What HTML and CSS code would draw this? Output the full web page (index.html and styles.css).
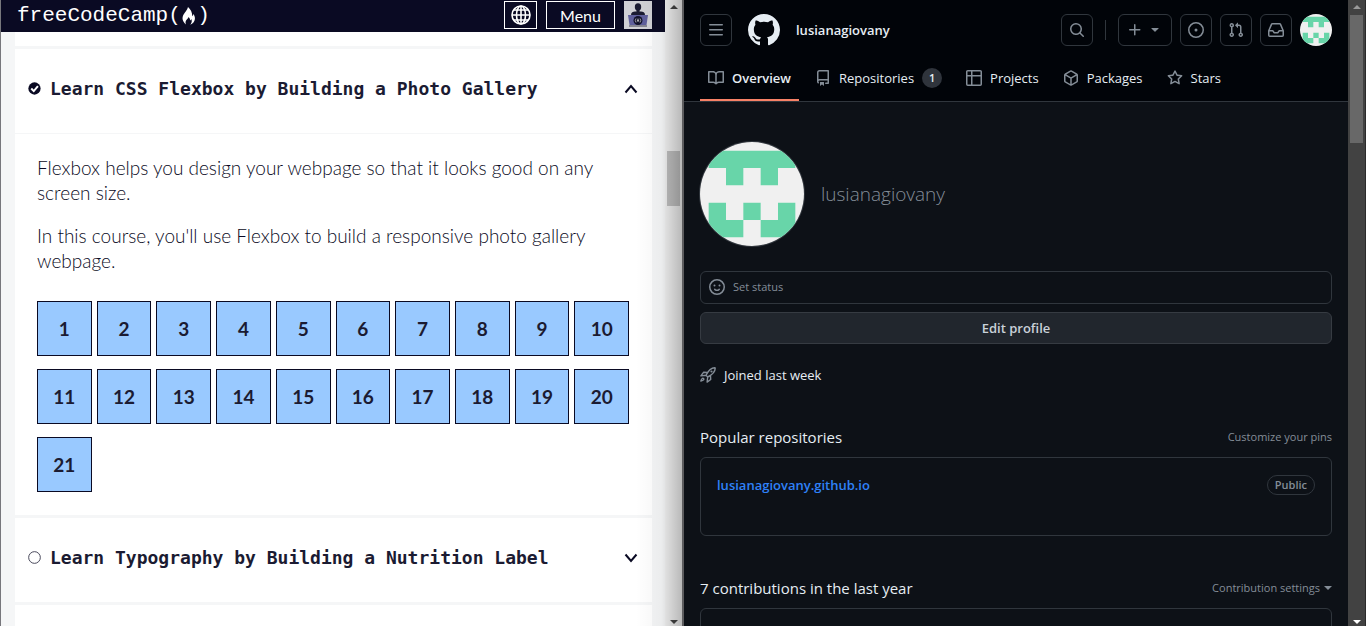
FILE: index.html
```html
<!DOCTYPE html>
<html lang="en">
<head>
<meta charset="utf-8">
<title>freeCodeCamp and GitHub</title>
<link rel="stylesheet" href="styles.css">
</head>
<body>
<svg class="defs" aria-hidden="true">
  <symbol id="identicon" viewBox="0 0 420 420"><rect width="420" height="420" fill="#f0f0f0"/><path fill="#68d5a9" d="M35 35h350v70h-70v70h-70v-70h-70v70h-70v-70H35zM35 245h70v70h70v70H35zM175 245h70v70h-70zM315 245h70v140H245v-70h70z"/></symbol>
</svg>
<div class="desktop">
  <section class="window camp">
    <div class="camp-page">
      <header class="camp-header">
        <a class="camp-logo" href="#">freeCodeCamp<span class="paren">(</span><svg class="flame" viewBox="0 0 14 18"><path fill="#fff" d="M6 0c-.4 3-3.200 5-4.700 8C.2 10.200.3 12.500 1.300 14.300c.6 1.200 1.500 2.300 2.700 3.200-.6-1.500-.6-3 .2-4.200C5 12 6.200 11.500 6.500 10c1 .8 1.700 2 1.600 3.400.6-.2 1-.7 1.200-1.300.9 1.900.5 3.900-1 5.600 2.500-1 4.400-3 4.600-5.600.2-2-.6-3.600-1.500-5-.1 1-.4 1.700-1.100 2.100C10.200 5.500 8.800 2.300 6 0z"/></svg><span class="paren">)</span></a>
        <div class="camp-actions">
          <button class="outline globe" aria-label="Language"><svg viewBox="0 0 20 20" fill="none" stroke="#fff" stroke-width="1.600"><circle cx="10" cy="10" r="9"/><ellipse cx="10" cy="10" rx="4.500" ry="9"/><path d="M10 1v18M1 10h18M2.500 5h15M2.500 15h15"/></svg></button>
          <button class="outline menu">Menu</button>
          <a class="profile" href="#" aria-label="Profile"><svg viewBox="0 0 28 28"><rect width="28" height="28" fill="#d0d0d5"/><g fill="#1b1b32"><ellipse cx="14" cy="6" rx="3.200" ry="3.700"/><path d="M12.500 8h3v3h-3zM7 14c0-2.500 2-3.200 4-3.400h6c2 .2 4 .9 4 3.400z"/></g><path fill="#5f5f9c" d="M4 14h20l-1.500 10h-17z"/><path fill="#858591" d="M5 24h18v2H5z"/><circle cx="14" cy="19.500" r="4.500" fill="#12122c"/><path d="M12 17.500q-1.500 2 0 4M16 17.500q1.500 2 0 4" fill="none" stroke="#bbb" stroke-width=".8"/><path d="M14 17l1.300 3.500h-2.600z" fill="#bbb"/></svg></a>
        </div>
      </header>
      <main class="course-list">
        <div class="course-previous"></div>
        <article class="course">
          <button class="course-title"><svg class="mark" viewBox="0 0 14 14"><circle cx="7" cy="7" r="6.600" fill="#0a0a23"/><path d="M3.500 7l2.700 2.800 4.500-5.300" fill="none" stroke="#fff" stroke-width="2.200"/></svg><span>Learn CSS Flexbox by Building a Photo Gallery</span><svg class="chevron" viewBox="0 0 14 10"><path d="M1.500 8.500L7 2l5.500 6.500" fill="none" stroke="#0a0a23" stroke-width="2"/></svg></button>
          <div class="course-body">
            <p>Flexbox helps you design your webpage so that it looks good on any screen size.</p>
            <p>In this course, you'll use Flexbox to build a responsive photo gallery webpage.</p>
            <nav class="steps" aria-label="Steps">
              <a href="#">1</a><a href="#">2</a><a href="#">3</a><a href="#">4</a><a href="#">5</a><a href="#">6</a><a href="#">7</a><a href="#">8</a><a href="#">9</a><a href="#">10</a><a href="#">11</a><a href="#">12</a><a href="#">13</a><a href="#">14</a><a href="#">15</a><a href="#">16</a><a href="#">17</a><a href="#">18</a><a href="#">19</a><a href="#">20</a><a href="#">21</a>
            </nav>
          </div>
        </article>
        <article class="course">
          <button class="course-title"><svg class="mark" viewBox="0 0 14 14"><circle cx="7" cy="7" r="6.300" fill="none" stroke="#3b3b4f"/></svg><span>Learn Typography by Building a Nutrition Label</span><svg class="chevron" viewBox="0 0 14 10"><path d="M1.500 1.500L7 8l5.500-6.500" fill="none" stroke="#0a0a23" stroke-width="2"/></svg></button>
        </article>
        <article class="course course-next"></article>
      </main>
    </div>
    <div class="track light"><i class="arrow up"></i><i class="thumb"></i><i class="arrow down"></i></div>
    <div class="edge-shade"></div>
  </section>

  <section class="window hub">
    <div class="hub-page">
      <header class="hub-header">
        <div class="bar">
          <button class="box" aria-label="Open menu"><svg class="icon" viewBox="0 0 16 16"><path d="M1 2.750A.75.75 0 0 1 1.750 2h12.500a.75.75 0 0 1 0 1.500H1.750A.75.75 0 0 1 1 2.750Zm0 5A.75.75 0 0 1 1.750 7h12.500a.75.75 0 0 1 0 1.500H1.750A.75.75 0 0 1 1 7.750ZM1.750 12h12.500a.75.75 0 0 1 0 1.500H1.750a.75.75 0 0 1 0-1.500Z"/></svg></button>
          <a class="octocat" href="#" aria-label="Home"><svg viewBox="0 0 16 16"><path fill="#e6edf3" d="M8 0c4.420 0 8 3.580 8 8a8.013 8.013 0 0 1-5.450 7.590c-.4.080-.55-.17-.55-.38 0-.27.010-1.130.010-2.200 0-.75-.25-1.230-.54-1.480 1.780-.2 3.650-.88 3.650-3.950 0-.88-.31-1.590-.82-2.150.080-.2.360-1.020-.080-2.120 0 0-.67-.22-2.200.82-.64-.18-1.320-.27-2-.27-.68 0-1.360.090-2 .27-1.530-1.030-2.200-.82-2.200-.82-.44 1.100-.16 1.920-.080 2.120-.51.560-.82 1.280-.82 2.150 0 3.060 1.860 3.750 3.640 3.950-.23.200-.44.550-.51 1.070-.46.210-1.610.55-2.330-.66-.15-.24-.6-.83-1.230-.82-.67.010-.27.380.010.530.34.190.73.900.82 1.130.16.450.68 1.310 2.690.94 0 .67.010 1.300.010 1.490 0 .21-.15.450-.55.380A7.995 7.995 0 0 1 0 8c0-4.420 3.580-8 8-8Z"/></svg></a>
          <a class="owner" href="#">lusianagiovany</a>
          <div class="tools">
            <button class="box" aria-label="Search"><svg class="icon" viewBox="0 0 16 16"><path d="M10.680 11.740a6 6 0 0 1-7.922-8.982 6 6 0 0 1 8.982 7.922l3.040 3.040a.749.749 0 0 1-1.060 1.060l-3.040-3.040ZM11.500 7a4.499 4.499 0 1 0-8.997 0A4.499 4.499 0 0 0 11.500 7Z"/></svg></button>
            <i class="divider"></i>
            <button class="box create" aria-label="Create new"><svg class="icon" viewBox="0 0 16 16"><path d="M7.750 2a.75.75 0 0 1 .75.750V7h4.250a.75.75 0 0 1 0 1.500H8.500v4.250a.75.75 0 0 1-1.500 0V8.500H2.750a.75.75 0 0 1 0-1.500H7V2.750A.75.75 0 0 1 7.750 2Z"/></svg><svg class="icon" viewBox="0 0 16 16"><path d="m4.427 6.427 3.396 3.396a.25.25 0 0 0 .354 0l3.396-3.396A.25.25 0 0 0 11.396 6H4.604a.25.25 0 0 0-.177.427Z"/></svg></button>
            <button class="box" aria-label="Issues"><svg class="icon" viewBox="0 0 16 16"><path d="M8 9.500a1.500 1.500 0 1 0 0-3 1.500 1.500 0 0 0 0 3Z"/><path d="M8 0a8 8 0 1 1 0 16A8 8 0 0 1 8 0ZM1.500 8a6.500 6.500 0 1 0 13 0 6.500 6.500 0 0 0-13 0Z"/></svg></button>
            <button class="box" aria-label="Pull requests"><svg class="icon" viewBox="0 0 16 16"><path d="M1.500 3.250a2.250 2.250 0 1 1 3 2.122v5.256a2.251 2.251 0 1 1-1.500 0V5.372A2.250 2.250 0 0 1 1.500 3.250Zm5.677-.177L9.573.677A.25.25 0 0 1 10 .854V2.500h1A2.500 2.500 0 0 1 13.500 5v5.628a2.251 2.251 0 1 1-1.500 0V5a1 1 0 0 0-1-1h-1v1.646a.25.25 0 0 1-.427.177L7.177 3.427a.25.25 0 0 1 0-.354ZM3.750 2.500a.75.75 0 1 0 0 1.500.75.75 0 0 0 0-1.500Zm0 9.500a.75.75 0 1 0 0 1.500.75.75 0 0 0 0-1.500Zm8.250.750a.75.75 0 1 0 1.500 0 .75.75 0 0 0-1.500 0Z"/></svg></button>
            <button class="box" aria-label="Inbox"><svg class="icon" viewBox="0 0 16 16"><path d="M2.800 2.060A1.750 1.750 0 0 1 4.410 1h7.180c.7 0 1.333.417 1.610 1.060l2.740 6.395c.04.093.06.194.06.295v4.500A1.750 1.750 0 0 1 14.250 15H1.750A1.750 1.750 0 0 1 0 13.250v-4.500c0-.101.020-.202.060-.295Zm1.610.440a.25.25 0 0 0-.23.152L1.887 8H4.750a.75.75 0 0 1 .6.300L6.625 10h2.750l1.275-1.700a.75.75 0 0 1 .6-.3h2.863L11.820 2.652a.25.25 0 0 0-.23-.152Zm10.090 7h-2.875l-1.275 1.700a.75.75 0 0 1-.6.300h-3.500a.75.75 0 0 1-.6-.3L4.375 9.500H1.500v3.750c0 .138.112.250.250.250h12.500a.25.25 0 0 0 .250-.250Z"/></svg></button>
            <a class="avatar small" href="#" aria-label="Account"><svg><use href="#identicon"/></svg></a>
          </div>
        </div>
        <nav class="tabs">
          <a class="tab current" href="#"><svg class="icon" viewBox="0 0 16 16"><path d="M0 1.750A.75.75 0 0 1 .75 1h4.253c1.227 0 2.317.590 3 1.501A3.743 3.743 0 0 1 11.006 1h4.245a.75.75 0 0 1 .75.750v10.500a.75.75 0 0 1-.75.750h-4.507a2.250 2.250 0 0 0-1.591.659l-.622.621a.75.75 0 0 1-1.060 0l-.622-.621A2.250 2.250 0 0 0 5.258 13H.75a.75.75 0 0 1-.75-.75Zm7.251 10.324.004-5.073-.002-2.253A2.250 2.250 0 0 0 5.003 2.500H1.500v9h3.757a3.750 3.750 0 0 1 1.994.574ZM8.755 4.750l-.004 7.322a3.752 3.752 0 0 1 1.992-.572H14.500v-9h-3.495a2.250 2.250 0 0 0-2.250 2.250Z"/></svg>Overview</a>
          <a class="tab" href="#"><svg class="icon" viewBox="0 0 16 16"><path d="M2 2.500A2.500 2.500 0 0 1 4.500 0h8.750a.75.75 0 0 1 .75.750v12.500a.75.75 0 0 1-.75.750h-2.500a.75.75 0 0 1 0-1.500h1.750v-2h-8a1 1 0 0 0-.714 1.700.75.75 0 1 1-1.072 1.050A2.495 2.495 0 0 1 2 11.500Zm10.500-1h-8a1 1 0 0 0-1 1v6.708A2.486 2.486 0 0 1 4.500 9h8ZM5 12.250a.25.25 0 0 1 .250-.250h3.500a.25.25 0 0 1 .250.250v3.250a.25.25 0 0 1-.4.200l-1.450-1.087a.25.25 0 0 0-.3 0L5.400 15.700a.25.25 0 0 1-.4-.2Z"/></svg>Repositories<span class="counter">1</span></a>
          <a class="tab" href="#"><svg class="icon" viewBox="0 0 16 16"><path d="M0 1.750C0 .784.784 0 1.750 0h12.500C15.216 0 16 .784 16 1.750v12.500A1.750 1.750 0 0 1 14.250 16H1.750A1.750 1.750 0 0 1 0 14.250ZM6.500 6.500v8h7.750a.25.25 0 0 0 .250-.250V6.500Zm8-1.500V1.750a.25.25 0 0 0-.250-.250H6.500V5Zm-13 1.500v7.750c0 .138.112.250.250.250H5v-8ZM5 5V1.500H1.750a.25.25 0 0 0-.250.250V5Z"/></svg>Projects</a>
          <a class="tab" href="#"><svg class="icon" viewBox="0 0 16 16"><path d="m8.878.392 5.250 3.045c.54.314.872.890.872 1.514v6.098a1.750 1.750 0 0 1-.872 1.514l-5.250 3.045a1.750 1.750 0 0 1-1.756 0l-5.250-3.045A1.750 1.750 0 0 1 1 11.049V4.951c0-.624.332-1.201.872-1.514L7.122.392a1.750 1.750 0 0 1 1.756 0ZM7.875 1.690l-4.630 2.685L8 7.133l4.755-2.758-4.630-2.685a.248.248 0 0 0-.25 0ZM2.500 5.677v5.372c0 .090.047.171.125.216l4.625 2.683V8.432Zm6.250 8.271 4.625-2.683a.25.25 0 0 0 .125-.216V5.677L8.750 8.432Z"/></svg>Packages</a>
          <a class="tab" href="#"><svg class="icon" viewBox="0 0 16 16"><path d="M8 .25a.75.75 0 0 1 .673.418l1.882 3.815 4.210.612a.75.75 0 0 1 .416 1.279l-3.046 2.970.719 4.192a.751.751 0 0 1-1.088.791L8 12.347l-3.766 1.980a.75.75 0 0 1-1.088-.79l.72-4.194L.818 6.374a.75.75 0 0 1 .416-1.280l4.210-.611L7.327.668A.75.75 0 0 1 8 .25Zm0 2.445L6.615 5.500a.75.75 0 0 1-.564.410l-3.097.450 2.240 2.184a.75.75 0 0 1 .216.664l-.528 3.084 2.769-1.456a.75.75 0 0 1 .698 0l2.770 1.456-.53-3.084a.75.75 0 0 1 .216-.664l2.240-2.183-3.096-.45a.75.75 0 0 1-.564-.41L8 2.694Z"/></svg>Stars</a>
        </nav>
      </header>
      <main class="hub-main">
        <div class="identity"><a class="avatar large" href="#" aria-label="Change avatar"><svg><use href="#identicon"/></svg></a><h1>lusianagiovany</h1></div>
        <button class="status"><svg class="icon" viewBox="0 0 16 16"><path d="M8 0a8 8 0 1 1 0 16A8 8 0 0 1 8 0ZM1.500 8a6.500 6.500 0 1 0 13 0 6.500 6.500 0 0 0-13 0Zm3.820 1.636a.75.75 0 0 1 1.038.175l.007.009c.103.118.220.222.350.310.264.178.683.370 1.285.370.602 0 1.020-.192 1.285-.371.130-.088.247-.192.350-.31l.007-.008a.75.75 0 0 1 1.222.870l-.022.030c-.182.248-.422.480-.712.678A3.750 3.750 0 0 1 8 12a3.750 3.750 0 0 1-2.130-.62 3.090 3.090 0 0 1-.725-.706.750.750 0 0 1 .175-1.038ZM5.500 5.500a1 1 0 1 1 0 2 1 1 0 0 1 0-2Zm5 0a1 1 0 1 1 0 2 1 1 0 0 1 0-2Z"/></svg>Set status</button>
        <button class="edit">Edit profile</button>
        <p class="joined"><svg class="icon" viewBox="0 0 16 16"><g fill="none" stroke="#848d97" stroke-width="1.400" stroke-linejoin="round" stroke-linecap="round"><path d="M6 8.300C8 4.300 10.500.8 14.700.8c.3 0 .5.200.5.500C15.200 5.500 11.700 8 7.700 10zM7.500 5.500l-4-.2L.9 8.900 6 8.300M10.500 8.500l.2 4-3.600 2.600.6-5.100M2.200 11.500c.8-.9 2.200.5 1.300 1.400-.5.600-1.600.9-2.600 1.100.2-1 .6-2 1.300-2.500z"/></g><circle cx="11.500" cy="4.500" r="1.100"/></svg>Joined last week</p>
        <div class="heading"><h2>Popular repositories</h2><a href="#">Customize your pins</a></div>
        <div class="card repo"><a href="#">lusianagiovany.github.io</a><span class="badge">Public</span></div>
        <div class="heading"><h2>7 contributions in the last year</h2><button class="settings">Contribution settings<i class="caret"></i></button></div>
        <div class="card graph"></div>
      </main>
    </div>
    <div class="track dark"><i class="arrow up"></i><i class="thumb"></i><i class="arrow down"></i></div>
  </section>
</div>
</body>
</html>
```
FILE: styles.css
```css
* { box-sizing: border-box; }
body { margin: 0; background: #0d1117; }
h1, h2, p { margin: 0; }
a { color: inherit; text-decoration: none; }
button { font: inherit; color: inherit; background: none; border: 0; padding: 0; cursor: pointer; }
svg { display: block; flex: none; }
.defs { position: absolute; width: 0; height: 0; }
.desktop { display: grid; grid-template-columns: 684fr 682fr; height: 100vh; overflow: hidden; }
.window { display: flex; min-width: 0; height: 100vh; overflow: hidden; position: relative; }

/* Scrollbars */
.track { display: flex; flex-direction: column; align-items: center; flex: none; padding: 5px 0 2px; }
.thumb { width: 13px; }
.arrow { border: 4px solid transparent; flex: none; }
.arrow.up { border-top: 0; border-bottom-color: currentColor; }
.arrow.down { border-bottom: 0; border-top-color: currentColor; margin-top: auto; }
.track.light { width: 17px; background: #f3f3f3; color: #444; }
.track.light .thumb { height: 55px; margin-top: 142px; background: #c1c1c1; }
.track.dark { width: 18px; background: #424242; color: #999; border-right: 1px solid #2b2b2b; }
.track.dark .thumb { height: 128px; margin-top: 6px; background: #686868; }
.track.dark .down { color: #fff; }

/* freeCodeCamp */
.camp { background: #f5f6f7; border-left: 1px solid #77777c; border-right: 2px solid #5d5d5f; font-family: Lato, sans-serif; color: #0a0a23; }
.edge-shade { position: absolute; top: 0; bottom: 0; right: 0; width: 46px; background: linear-gradient(to right, rgba(0,0,0,0), rgba(0,0,0,.04) 55%, rgba(0,0,0,.24)); pointer-events: none; }
.camp-page { flex: 1; min-width: 0; }
.camp-header { height: 32px; background: #0a0a23; color: #fff; display: flex; justify-content: space-between; padding: 0 13px 0 16px; }
.camp-logo { display: flex; align-items: center; height: 31px; font: 21px "Liberation Mono", monospace; }
.paren { width: 13px; }
.flame { width: 14px; height: 18px; margin: 0 1px; }
.camp-actions { display: flex; align-items: flex-start; gap: 9px; padding-top: 1px; }
.outline { height: 28px; border: 1px solid #fff; }
.globe { width: 33px; display: flex; align-items: center; justify-content: center; }
.globe svg { width: 20px; height: 20px; }
.menu { width: 69px; font-size: 16px; }
.profile svg { width: 28px; height: 28px; }
.course-list { margin: 0 13px 0 14px; display: flex; flex-direction: column; gap: 3px; }
.course-previous { height: 14px; background: #fff; }
.course { background: #fff; }
.course-title { width: 100%; height: 84px; padding: 0 14px 5px 13px; display: flex; align-items: center; gap: 9px; text-align: left; font: bold 18px "DejaVu Sans Mono", monospace; color: #1b1b32; }
.course-title span { flex: 1; min-width: 0; white-space: nowrap; }
.mark { width: 13px; height: 13px; }
.chevron { width: 14px; height: 10px; }
.course-body { border-top: 1px solid #f5f6f7; padding: 21px 23px 23px 22px; font-size: 19px; font-weight: 300; line-height: 25px; color: #0a0a23; }
.course-body p + p { margin-top: 18px; }
.steps { margin-top: 28px; display: grid; grid-template-columns: repeat(10, 1fr); gap: 13px 5px; }
.steps a { height: 55px; display: flex; align-items: center; justify-content: center; border: 1px solid #0a0a23; background: #99c9ff; font-weight: bold; color: #1b1b32; }
.course-next { height: 84px; }

/* GitHub */
.hub { background: #0d1117; color: #e6edf3; font: 13px/20px "Open Sans", sans-serif; }
.hub-page { flex: 1; min-width: 0; }
.icon { width: 16px; height: 16px; fill: #848d97; }
.hub-header { background: #010409; border-bottom: 1px solid #30363d; padding: 14px 16px 0; }
.bar { display: flex; align-items: center; gap: 16px; height: 32px; }
.box { width: 32px; height: 32px; border: 1px solid #30363d; border-radius: 6px; display: flex; align-items: center; justify-content: center; }
.box.create { width: 54px; gap: 4px; }
.octocat svg { width: 32px; height: 32px; }
.owner { font-weight: 600; }
.tools { margin-left: auto; display: flex; align-items: center; gap: 8px; }
.divider { width: 1px; height: 20px; background: #30363d; margin: 0 4px; }
.avatar { display: block; border-radius: 50%; overflow: hidden; flex: none; }
.avatar svg { width: 100%; height: 100%; }
.small { width: 32px; height: 32px; }
.large { width: 104px; height: 104px; box-shadow: 0 0 0 1px #30363d; }
.tabs { display: flex; gap: 8px; margin-top: 8px; height: 47px; }
.tab { display: flex; align-items: center; gap: 8px; padding: 3px 8px 0; height: 47px; border-bottom: 2px solid transparent; }
.tab.current { border-color: #f78166; font-weight: 600; }
.counter { min-width: 20px; height: 20px; border-radius: 10px; background: #2f343c; text-align: center; font-size: 11px; font-weight: 600; }
.hub-main { padding: 40px 16px 0; }
.identity { display: flex; align-items: center; gap: 17px; }
.identity h1 { font-size: 19px; font-weight: 300; line-height: 24px; color: #848d97; }
.status { width: 100%; height: 33px; margin-top: 25px; padding: 0 8px 2px; display: flex; align-items: center; gap: 8px; border: 1px solid #30363d; border-radius: 6px; font-size: 11px; color: #848d97; }
.edit { display: block; width: 100%; height: 32px; margin-top: 8px; background: #21262d; border: 1px solid #363b42; border-radius: 6px; font-weight: 600; color: #c9d1d9; }
.joined { display: flex; align-items: center; gap: 8px; margin-top: 21px; }
.heading { display: flex; align-items: center; justify-content: space-between; margin-top: 40px; height: 24px; font-size: 11px; color: #848d97; }
.heading h2 { font-size: 15px; font-weight: 400; color: #e6edf3; }
.card { margin-top: 8px; border: 1px solid #30363d; border-radius: 6px; }
.repo { height: 79px; padding: 17px 16px; display: flex; align-items: flex-start; justify-content: space-between; font-weight: 600; color: #2f81f7; }
.badge { height: 20px; padding: 0 7px; border: 1px solid #30363d; border-radius: 10px; line-height: 18px; font-size: 11px; color: #848d97; }
.settings { display: flex; align-items: center; gap: 4px; }
.caret { border: 4px solid transparent; border-top-color: currentColor; border-bottom: 0; }
.graph { height: 120px; }
```
